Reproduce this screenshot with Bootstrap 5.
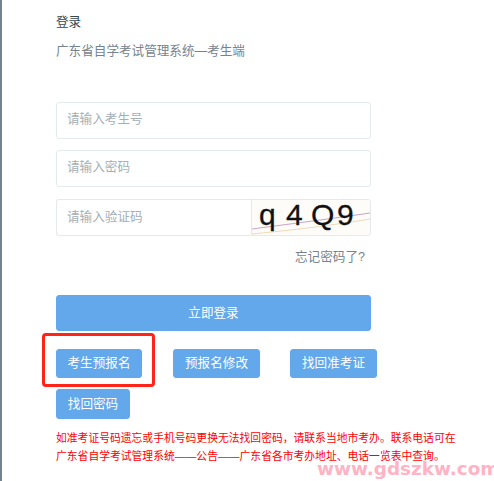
<!DOCTYPE html>
<html lang="zh-CN">
<head>
<meta charset="utf-8">
<title>登录</title>
<link href="https://cdn.jsdelivr.net/npm/bootstrap@5.3.0/dist/css/bootstrap.min.css" rel="stylesheet">
<style>
html,body{height:100%}
body{margin:0;background:#fff;font-family:"Liberation Sans","Noto Sans CJK SC",sans-serif;font-size:12.6px;color:#76838f;overflow:hidden}
.page-frame{position:relative;height:481px;border-left:2px solid #76838f;padding:0 0 0 54px}
.form-col{width:315px;padding-top:13px}
.ttl{font-size:12.6px;line-height:18px;color:#37474f;margin:0 0 11px}
.sub{font-size:12.6px;line-height:18px;margin:0 0 42px}
.fld{height:37px;margin-bottom:12px;border:1px solid #e4eaec;border-radius:3px;font-size:12.6px;padding:0 10px 3px;color:#76838f;box-shadow:none}
.fld-first{margin-bottom:11px}
.fld::placeholder{color:#a3afb7}
.cap-row{display:flex;height:37px}
.cap-row .fld{flex:1 1 auto;min-width:0;border-right:0;border-radius:3px 0 0 3px;margin:0;padding-bottom:1px}
.cap-box{flex:0 0 120px;height:37px;border:1px solid #e4eaec;border-radius:0 3px 3px 0;overflow:hidden;display:block}
.cap-box svg{display:block}
.cap-txt{font-family:"Liberation Sans",sans-serif;font-size:30px;fill:#111;stroke:#111;stroke-width:.3px}
.forgot{display:block;text-align:right;line-height:18px;margin:12px 6px 0 0;color:#76838f;text-decoration:none;font-size:12.6px}
.btn-pri{background:#62a8ea;border:1px solid #62a8ea;color:#fff;border-radius:3px;font-size:12.6px;line-height:18px;padding:0 0 1px;white-space:nowrap}
.btn-pri:hover{background:#62a8ea;border-color:#62a8ea;color:#fff}
.btn-login{display:block;width:100%;height:36px;margin-top:29px}
.row-one{display:flex;gap:31px;width:340px;margin-top:18px}
.btn-sm-a{height:29px;width:86px}
.btn-sm-b{height:29px;width:87px}
.row-one .btn-sm-b:last-child{margin-left:-1px}
.btn-sm-c{height:30px;width:74px;display:block;margin-top:11px}
.note{color:#f00;font-size:10.8px;line-height:18px;white-space:nowrap;margin:10px 0 0}
.redbox{position:absolute;left:40px;top:333px;width:113px;height:54px;border:3px solid #ff2418;border-radius:4px;pointer-events:none}
.wmark{position:absolute;left:315px;top:456px;font-family:"DejaVu Sans",sans-serif;font-weight:700;font-size:18.4px;line-height:26px;letter-spacing:0;color:#ffb3c4;white-space:nowrap}
</style>
</head>
<body>
<div class="page-frame">
  <div class="form-col">
    <p class="ttl">登录</p>
    <p class="sub">广东省自学考试管理系统—考生端</p>
    <form>
      <input class="form-control fld fld-first" type="text" placeholder="请输入考生号">
      <input class="form-control fld" type="password" placeholder="请输入密码">
      <div class="cap-row">
        <input class="form-control fld" type="text" placeholder="请输入验证码">
        <span class="cap-box">
          <svg width="118" height="35" viewBox="0 0 118 35" aria-label="验证码">
            <rect width="118" height="35" fill="#fdfcf9"/>
            <path d="M0 29 C30 25 70 20 118 13" stroke="#c9a3c4" stroke-width="1" fill="none"/>
            <path d="M0 34 C30 31 70 27 118 19" stroke="#ecd9b8" stroke-width="1" fill="none"/>
            <text class="cap-txt" x="7 0 34 0 59 85" y="25">q 4 Q9</text>
          </svg>
        </span>
      </div>
      <a class="forgot" href="#">忘记密码了?</a>
      <button type="button" class="btn btn-pri btn-login">立即登录</button>
      <div class="row-one">
        <button type="button" class="btn btn-pri btn-sm-a">考生预报名</button>
        <button type="button" class="btn btn-pri btn-sm-b">预报名修改</button>
        <button type="button" class="btn btn-pri btn-sm-b">找回准考证</button>
      </div>
      <button type="button" class="btn btn-pri btn-sm-c">找回密码</button>
    </form>
    <p class="note">如准考证号码遗忘或手机号码更换无法找回密码，请联系当地市考办。联系电话可在<br>广东省自学考试管理系统——公告——广东省各市考办地址、电话一览表中查询。</p>
  </div>
  <div class="redbox"></div>
  <div class="wmark">www.gdszkw.com</div>
</div>
<script src="https://cdn.jsdelivr.net/npm/bootstrap@5.3.0/dist/js/bootstrap.bundle.min.js"></script>
</body>
</html>
